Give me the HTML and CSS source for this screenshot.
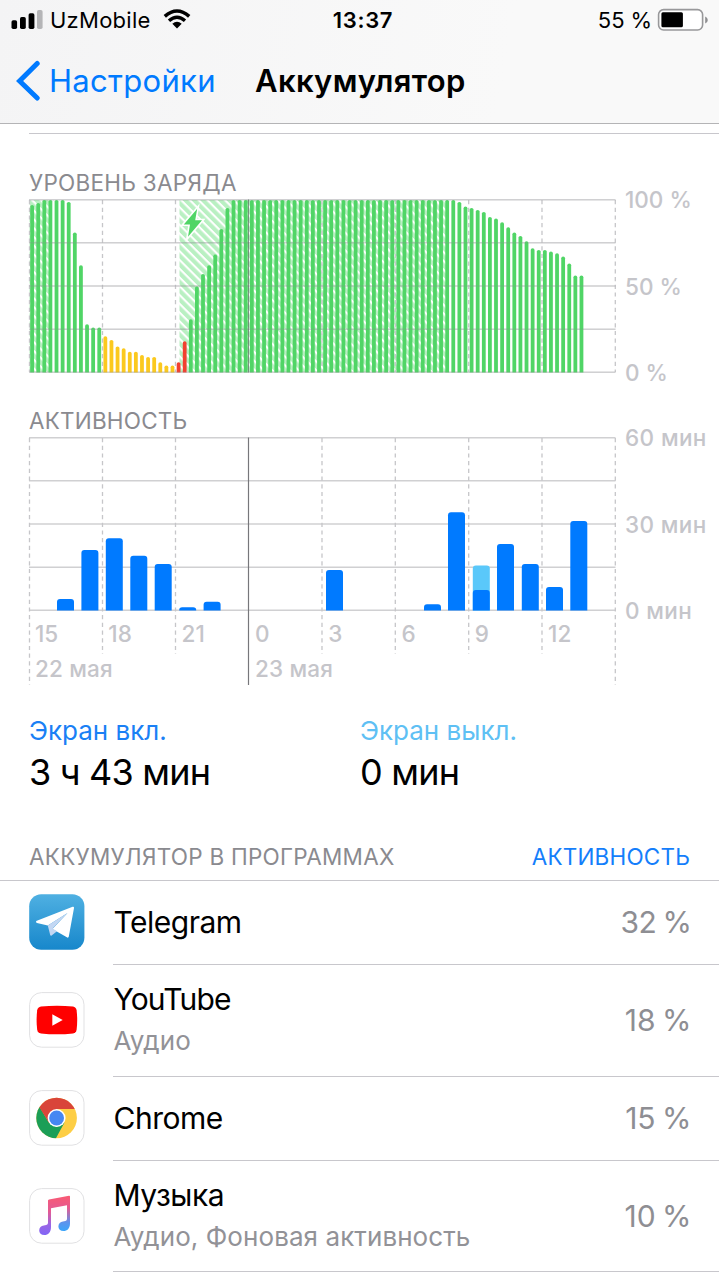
FILE: index.html
```html
<!DOCTYPE html>
<html lang="ru">
<head>
<meta charset="utf-8">
<title>Аккумулятор</title>
<link rel="stylesheet" href="styles.css">
</head>
<body>
<header class="top">
  <div class="status">
    <div class="status-left">
      <svg class="signal" width="32" height="20" viewBox="0 0 32 20"><rect x="0.5" y="10.3" width="5.6" height="8.7" rx="1.7"/><rect x="9" y="7" width="5.8" height="12" rx="1.7"/><rect x="17.6" y="3.3" width="5.8" height="15.7" rx="1.7"/><rect x="26" y="0" width="5.6" height="19" rx="1.7" fill="#b5b5b7"/></svg>
      <span class="carrier">UzMobile</span>
      <svg class="wifi" width="28" height="20" viewBox="0 0 28 20"><path d="M1.8 7.4Q14 -3.4 26.2 7.4" fill="none" stroke="#000" stroke-width="3.5"/><path d="M6 11.8Q14 4.6 22 11.8" fill="none" stroke="#000" stroke-width="3.4"/><path d="M9.3 14.7Q14 10.6 18.7 14.7L14 19.4Z"/></svg>
    </div>
    <div class="clock">13:37</div>
    <div class="status-right">
      <span class="charge">55 %</span>
      <svg width="52" height="24" viewBox="0 0 52 24"><rect x="1.6" y="1.6" width="44" height="20.4" rx="5" fill="#fff" stroke="#98989a" stroke-width="1.6"/><rect x="4.4" y="4.3" width="21.5" height="15" rx="1.5"/><path d="M48.2 8.5q2.6 1 2.6 3.5t-2.6 3.5z" fill="#8e8e90"/></svg>
    </div>
  </div>
  <nav class="nav">
    <a class="back"><svg width="26" height="42" viewBox="0 0 26 42"><path d="M22.2 3.5L4.6 21L22.2 38" fill="none" stroke="#007aff" stroke-width="5" stroke-linecap="round" stroke-linejoin="miter"/></svg><span class="back-label">Настройки</span></a>
    <h1 class="title">Аккумулятор</h1>
  </nav>
</header>
<main>
  <div class="rule"></div>
  <section class="chart level">
    <h2 class="caption cap-level">УРОВЕНЬ ЗАРЯДА</h2>
    <div class="plot">
      <svg id="level" width="590" height="178" viewBox="28 197 590 178"></svg>
      <div class="axis"><span>100 %</span><span>50 %</span><span>0 %</span></div>
    </div>
  </section>
  <section class="chart activity">
    <h2 class="caption cap-activity">АКТИВНОСТЬ</h2>
    <div class="plot">
      <div class="canvas">
        <svg id="activity" width="590" height="252" viewBox="28 435 590 252"></svg>
        <div class="times">
          <div class="hours"><span>15</span><span>18</span><span>21</span><span>0</span><span>3</span><span>6</span><span>9</span><span>12</span></div>
          <div class="days"><span>22 мая</span><span>23 мая</span></div>
        </div>
      </div>
      <div class="axis minutes"><span>60 мин</span><span>30 мин</span><span>0 мин</span></div>
    </div>
  </section>
  <section class="totals">
    <div class="total"><div class="total-name on">Экран вкл.</div><div class="total-value">3 ч 43 мин</div></div>
    <div class="total"><div class="total-name off">Экран выкл.</div><div class="total-value">0 мин</div></div>
  </section>
  <section class="apps">
    <div class="apps-head"><h2 class="caption cap-apps">АККУМУЛЯТОР В ПРОГРАММАХ</h2><a class="toggle">АКТИВНОСТЬ</a></div>
    <div class="row">
      <svg class="icon" viewBox="0 0 56 56"><defs><linearGradient id="tg" x1="0" y1="0" x2="0" y2="1"><stop offset="0" stop-color="#4fb0e2"/><stop offset="1" stop-color="#1787cb"/></linearGradient></defs><rect x="0.2" y="0.2" width="55.2" height="55.6" rx="12" fill="url(#tg)"/><path d="M7.2 27Q6.5 28.5 8 29L18.8 31.5L38.5 19L23.4 35L38.3 43.5Q39.4 44 39.8 42.6L45 14Q45.2 12.4 43.6 12.8Z" fill="#fff"/><path d="M18.8 31.5L38.5 19L23.6 34.4L28 37.2L22.6 41.6Q21.6 42.2 21.2 41Z" fill="#c3d7f3"/></svg>
      <div class="body"><div class="names"><div class="name">Telegram</div></div><div class="percent">32 %</div></div>
    </div>
    <div class="row tall">
      <svg class="icon" viewBox="0 0 56 56"><rect x="0.6" y="0.6" width="54.4" height="54.6" rx="12" fill="#fff" stroke="#e1e1e3"/><path d="M12 14.5Q28 12.8 44 14.5Q47 15 47.6 18.3Q48.8 28 47.6 37.7Q47 41 44 41.4Q28 43.2 12 41.4Q8.8 41 8.2 37.7Q7 28 8.2 18.3Q8.8 15 12 14.5Z" fill="#f00"/><path d="M23.3 22.3L33.7 28L23.3 33.8Z" fill="#fff"/></svg>
      <div class="body"><div class="names"><div class="name n-youtube">YouTube</div><div class="note">Аудио</div></div><div class="percent teens">18 %</div></div>
    </div>
    <div class="row">
      <svg class="icon" viewBox="0 0 56 56"><defs><clipPath id="disc"><circle cx="27.6" cy="28" r="20.3"/></clipPath></defs><rect x="0.6" y="0.6" width="54.4" height="54.6" rx="12" fill="#fff" stroke="#e1e1e3"/><g clip-path="url(#disc)"><rect width="56" height="56" fill="#fdce45"/><path d="M0 10L11 17.5L19.8 32.5L27.6 37L35.5 32.5L26 50L0 56Z" fill="#1b9e57"/><path d="M9 15L19.8 32.5L27.6 19H50V0H5Z" fill="#d9453a"/></g><circle cx="27.6" cy="28" r="9" fill="#fff"/><circle cx="27.6" cy="28" r="7.4" fill="#4687f2"/></svg>
      <div class="body"><div class="names"><div class="name">Chrome</div></div><div class="percent teens">15 %</div></div>
    </div>
    <div class="row tall">
      <svg class="icon" viewBox="0 0 56 56"><defs><linearGradient id="note" x1="0" y1="0" x2="0" y2="1"><stop offset="0" stop-color="#fa5a72"/><stop offset="0.3" stop-color="#e65a90"/><stop offset="0.7" stop-color="#9a66e6"/><stop offset="1" stop-color="#8165f5"/></linearGradient><linearGradient id="note2" x1="0" y1="0" x2="0" y2="1"><stop offset="0" stop-color="#fa5a72"/><stop offset="0.35" stop-color="#e65a90"/><stop offset="0.75" stop-color="#5e93ec"/><stop offset="1" stop-color="#3aa5fa"/></linearGradient></defs><rect x="0.6" y="0.6" width="54.4" height="54.6" rx="12" fill="#fff" stroke="#e1e1e3"/><path d="M19 12.6Q19 11.6 20 11.4L40 7.7Q41 7.6 41 8.6V35.5C41 40.5 38 43 34.6 43C31.2 43 29.4 41 29.4 38.4C29.4 35.8 31.3 34.1 34 33.6L36.4 33.1Q38 32.7 38 31V17.2L22 20.3V25H19Z" fill="url(#note2)"/><path d="M19 13V20.9H22V39C22 44.5 19 47 15.5 47C12 47 10.2 45 10.2 42.4C10.2 39.8 12.1 38.1 14.8 37.6L17.2 37.1Q19 36.6 19 35Z" fill="url(#note)"/></svg>
      <div class="body"><div class="names"><div class="name">Музыка</div><div class="note">Аудио, Фоновая активность</div></div><div class="percent teens">10 %</div></div>
    </div>
  </section>
</main>
<script src="charts.js"></script>
</body>
</html>
```
FILE: styles.css
```css
* { box-sizing: border-box; }
body { margin: 0; width: 719px; height: 1280px; overflow: hidden; background: #fff; color: #000; font-family: Inter, "Liberation Sans", sans-serif; }
h1, h2 { margin: 0; font-weight: 400; }
svg { display: block; flex: none; }
span, div, h1, h2, a { white-space: nowrap; }

.top { height: 124px; background: linear-gradient(100deg, #f4f4f5, #f9f9f9 70%); border-bottom: 1px solid #b4b4b6; }
.status { height: 40px; display: grid; grid-template-columns: 1fr auto 1fr; align-items: center; padding: 0 10px 0 11px; font-size: 22px; line-height: 40px; }
.status-left, .status-right { display: flex; align-items: center; }
.status-right { justify-content: flex-end; gap: 5px; }
.carrier { margin-left: 7px; width: 102px; letter-spacing: 0.25px; }
.charge { letter-spacing: -0.1px; }
.wifi { margin-left: 11px; margin-top: -2px; }
.clock { font-weight: 600; letter-spacing: 0.7px; margin-left: 6px; }
.nav { height: 81px; display: flex; align-items: center; padding-left: 15px; line-height: 81px; }
.back { display: flex; align-items: center; width: 240px; color: #007aff; font-size: 31px; }
.back-label { margin-left: 8px; letter-spacing: 0.3px; }
.title { font-size: 31px; font-weight: 600; letter-spacing: 0.35px; }

.rule { height: 1px; margin: 9px 0 0 29px; background: #c8c7cc; }
.caption { color: #8a8a8f; font-size: 22.5px; line-height: 26px; }
.chart { padding-left: 28px; }
.chart .caption { padding-left: 1px; }
.cap-level { letter-spacing: 0.28px; }
.cap-activity, .toggle { letter-spacing: 0.2px; }
.cap-apps { letter-spacing: 0.25px; }
.level { margin-top: 36px; height: 238px; }
.plot { display: flex; margin-top: 1px; }
.axis { margin: -10px 0 0 7px; height: 199px; display: flex; flex-direction: column; justify-content: space-between; color: #c5c5ca; font-size: 22.5px; font-weight: 500; line-height: 26px; }
.minutes { letter-spacing: 0.4px; }
.canvas { display: grid; width: 590px; }
.canvas > * { grid-area: 1 / 1; }
.times { padding: 186px 0 0 7px; color: #c5c5ca; font-size: 22.5px; font-weight: 500; line-height: 26px; }
.hours { display: grid; grid-template-columns: repeat(8, 73.3px); }
.days { display: grid; grid-template-columns: 220px 220px; margin-top: 9px; letter-spacing: 0.15px; }

.totals { display: grid; grid-template-columns: 331px 1fr; padding: 28px 0 0 29px; }
.total-name { font-size: 26px; line-height: 32px; }
.total-value { font-size: 36px; line-height: 50px; letter-spacing: -0.8px; }
.on { color: #1a80f5; }
.off { color: #5ec0f4; }

.apps { margin-top: 47px; }
.apps-head { height: 37px; display: flex; justify-content: space-between; padding: 0 29px; border-bottom: 1px solid #c8c7cc; }
.toggle { color: #147efb; font-size: 22.5px; line-height: 26px; }
.row { height: 84px; display: flex; align-items: center; padding-left: 29px; }
.tall { height: 112px; }
.tall:last-child { height: 111px; }
.icon { width: 56px; height: 56px; margin-bottom: 2px; }
.body { align-self: stretch; flex: 1; margin-left: 28px; padding: 0 27.5px 1px 0.5px; display: flex; align-items: center; justify-content: space-between; border-bottom: 1px solid #c8c7cc; }
.tall .names { padding-bottom: 2px; }
.name { font-size: 30px; line-height: 44px; letter-spacing: -0.5px; }
.n-youtube { letter-spacing: -0.85px; }
.note { color: #929297; font-size: 26px; line-height: 40px; letter-spacing: 0.08px; }
.percent { color: #8e8e93; font-size: 30px; letter-spacing: -0.4px; word-spacing: -2px; }
.teens { letter-spacing: 0; }
```
FILE: charts.js
```js
const line = (x1, y1, x2, y2, attrs) => `<path d="M${x1} ${y1}L${x2} ${y2}" fill="none" ${attrs}/>`;
const columns = [29.5, 102.5, 175.5, 248.5, 322, 395.3, 468.7, 542, 615.3];
const dashed = 'stroke="#c6c6c9" stroke-width="1.3" stroke-dasharray="4.2 3.5"';
const grid = 'stroke="#8e8e93" stroke-width="1.5"';

// Battery level: top edge of each quarter-hour bar
const tops = [205, 203, 200, 200, 200, 200, 202, 232.7, 265.3, 324.3, 327.7, 327.7,
  336.3, 340, 346.5, 348.3, 351.8, 351.8, 355, 357, 357, 362.3, 365.7, 365.7,
  362.3, 341.3, 319.3, 286.3, 274, 265.3, 254.7, 229, 208];
while (tops.length < 70) tops.push(200);
tops.push(202, 206.7, 208, 210, 212, 217, 218.7, 222.3, 227.3, 232.7, 236, 241.3, 248.3,
  250, 250, 251.7, 253.3, 256.7, 263.7, 275.7, 275.7);

let level = `<defs><pattern id="hatch" width="6.2" height="6.2" patternUnits="userSpaceOnUse" patternTransform="rotate(-45)"><rect width="4.1" height="6.2" fill="#b9f0c2"/></pattern></defs>`;
level += '<rect x="29.5" y="200" width="22" height="172" fill="url(#hatch)"/><rect x="179.5" y="200" width="268" height="172" fill="url(#hatch)"/>';
const rows = [199.7, 242.8, 286, 329.2, 372.3];
rows.forEach(y => { level += line(29, y, 615.5, y, grid + ' stroke-opacity="0.25"'); });
columns.forEach((x, i) => { if (i !== 3) level += line(x, 200, x, 372, dashed); });
tops.forEach((y, i) => {
  const fill = i < 12 || i > 25 ? '#50d566' : i < 24 ? '#fbc91e' : '#f2402f';
  const x = 30.2 + i * 6.104;
  level += `<path d="M${x} 372.5V${y + 1.6}q0-1.7 1.9-1.7t1.9 1.7V372.5z" fill="${fill}"/>`;
});
rows.forEach(y => { level += line(29, y, 615.5, y, grid + ' stroke-opacity="0.22"'); });
level += line(248.5, 199.5, 248.5, 372.5, 'stroke="#5f7a66" stroke-opacity="0.8" stroke-width="1.1"');
level += '<path d="M197.2 208.8L183.8 224.5H190L188 236.8L202 220.3H195.2Z" fill="#50d566" stroke="#fff" stroke-width="3.2" paint-order="stroke"/>';
document.getElementById('level').innerHTML = level;

// Screen activity per hour: [left, top, colour]
const on = '#007aff', off = '#5ac8fa';
const bars = [[57, 599, on], [81.4, 550, on], [105.8, 538.2, on], [130.3, 555.8, on], [154.7, 564, on],
  [179.2, 607.2, on], [203.6, 601.8, on], [326, 570, on], [424, 604.2, on], [448, 512.3, on],
  [472.8, 565.5, off], [472.8, 590, on], [497, 544, on], [521.8, 564, on], [546, 587, on], [570.3, 521, on]];
let activity = '';
[437.7, 480.8, 524, 567.2, 610.3].forEach(y => { activity += line(29, y, 615.5, y, 'stroke="#d0d0d2" stroke-width="1.5"'); });
columns.forEach((x, i) => {
  if (i !== 3) activity += line(x, 438, x, i === 0 || i === 8 ? 685 : 654, dashed);
});
bars.forEach(([x, y, fill]) => {
  const r = Math.min(3, 610 - y);
  activity += `<path d="M${x} 610.4V${y + r}q0-${r} 3-${r}h11q3 0 3 ${r}V610.4z" fill="${fill}"/>`;
});
activity += line(248.5, 437.5, 248.5, 685, 'stroke="#77777b" stroke-width="1.2"');
document.getElementById('activity').innerHTML = activity;
```
